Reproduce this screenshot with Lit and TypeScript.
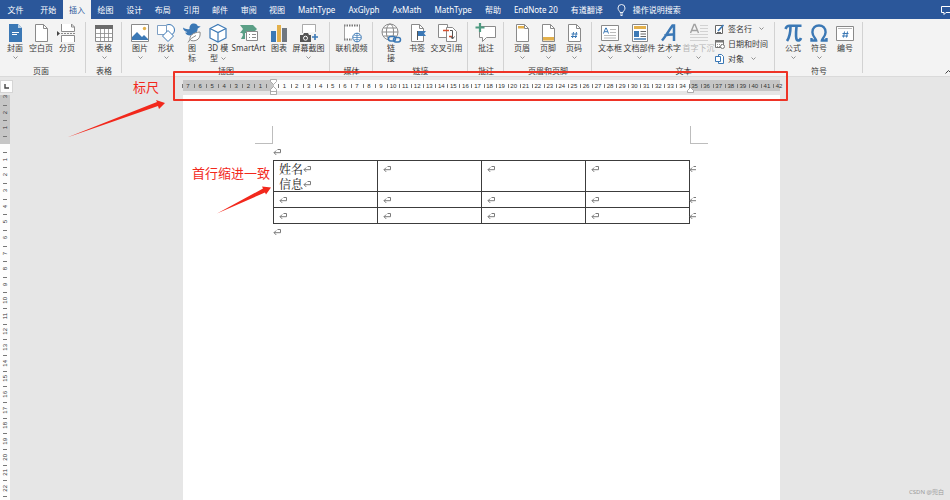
import { LitElement, html, svg, css, nothing, TemplateResult, SVGTemplateResult } from "lit";
import { customElement, property, state } from "lit/decorators.js";
import { classMap } from "lit/directives/class-map.js";

const BLUE = "#3b78b5";
const GREY = "#8a8a8a";
const GOLD = "#e3b04b";

const sheet = svg`<path d="M5.5 1.500h8l4 4v13h-12z" fill="#fff" stroke="${GREY}"/><path d="M13.500 1.500v4h4" fill="none" stroke="${GREY}"/>`;

const ICONS: Record<string, SVGTemplateResult> = {
  cover: svg`<path d="M5 1h9l4 4v14H5z" fill="${BLUE}"/><path d="M14 1v4h4z" fill="#bcd3e8"/><path d="M8 9.500h7M8 11.500h5" stroke="#fff"/>`,
  blank: sheet,
  pagebreak: svg`<path d="M5.500 1v7.500h13V4l-3-3M5.500 19v-6.500h13V19" fill="#fff" stroke="${GREY}"/><path d="M15.500 1v3h3" fill="none" stroke="${GREY}"/><path d="M5 10.500h15" stroke="${GREY}" stroke-dasharray="2 1"/><path d="M1 8l3 2.500-3 2.500z" fill="#444"/>`,
  table: svg`<path d="M2.500 2.500h17v16h-17z" fill="#fff" stroke="${GREY}"/><path d="M2 2h18v4H2z" fill="#6b6b6b"/><path d="M3 10.500h16M3 14.500h16M7.500 6v12M11.500 6v12M15.500 6v12" stroke="${GREY}" stroke-width=".8"/>`,
  picture: svg`<path d="M2.500 1.500h17v17h-17z" fill="#fff" stroke="${GREY}"/><path d="M3 17v-3l5-5 5 5 2-2 4 4v1z" fill="${BLUE}"/><circle cx="15.500" cy="5.500" r="1.700" fill="${GOLD}"/>`,
  shapes: svg`<circle cx="14" cy="7" r="5.500" fill="#fff" stroke="${BLUE}"/><path d="M2.500 2.500h9v9h-9z" fill="#fff" stroke="#7e9fc3"/><path d="M13 7.500l5.500 5.500-5.500 5.500L7.500 13z" fill="#fff" stroke="${BLUE}"/>`,
  duck: svg`<path d="M2 4.500c2 1.500 4.500 2 6.500 1.500C8.300 2.500 10 .5 13 .5c2 0 3.300 1 3.700 2.500l3 .5-3 2c0 3-2 5-3.500 6-4 2-8 1-9-2 1.500 0 2-.3 2-.6C4 8.500 2 7 2 4.500z" fill="${BLUE}"/><path d="M9 17.500c-1-5 3-8 10-8.500 1 6-3 10-9 8.500" fill="#fff" stroke="${GREY}"/><path d="M7 19.500c2-4 5-5 8-7" fill="none" stroke="${GREY}"/>`,
  cube: svg`<path d="M11 1.500l8 4v9.500l-8 4-8-4V5.500z" fill="#fff" stroke="${BLUE}" stroke-width="1.200"/><path d="M3 5.500l8 4 8-4M11 9.500V19" fill="none" stroke="${BLUE}" stroke-width="1.200"/>`,
  smartart: svg`<path d="M2 2h13l4 4-4 4H2l3-4z" fill="#5b9f86"/><path d="M3 16h4V9H4l1 3z" fill="#5b9f86"/><path d="M8.500 8.500h11v9h-11z" fill="#fff" stroke="${GREY}"/><path d="M11 11.500h1M14 11.500h4M11 14.500h1M14 14.500h4" stroke="${GREY}"/>`,
  chart: svg`<path d="M3 8h5v11H3z" fill="${BLUE}"/><path d="M9 2h4v17H9z" fill="${GOLD}"/><path d="M14 5h5v14h-5z" fill="#6f7780"/>`,
  screenshot: svg`<path d="M4.500 10V1.500h13V9" fill="#fff" stroke="${GREY}" stroke-width=".7"/><path d="M2 12h3l1-2h4l1 2h2v7H2z" fill="#555"/><circle cx="7.500" cy="15.200" r="2" fill="#555" stroke="#fff"/><path d="M17 11v6M14 14h6" stroke="${BLUE}" stroke-width="1.600"/>`,
  video: svg`<path d="M3 2h15v15H3z" fill="#fff"/><path d="M3 2.500h16M3 16.500h8" stroke="#777" stroke-width="2" stroke-dasharray="1.500 1"/><path d="M3.500 2v15M18.500 2v7" stroke="${GREY}" stroke-width=".8"/><circle cx="16" cy="14.500" r="4.300" fill="#fff" stroke="${BLUE}"/><path d="M12 14.500h8M16 10v9M13 12q3 1.500 6 0M13 17q3-1.500 6 0" fill="none" stroke="${BLUE}" stroke-width=".7"/>`,
  link: svg`<circle cx="10" cy="9" r="8" fill="#fff" stroke="${GREY}"/><ellipse cx="10" cy="9" rx="3.600" ry="8" fill="none" stroke="${GREY}"/><path d="M2 9h16M3.500 5h13M3.500 13h13" stroke="${GREY}" fill="none"/><rect x="8.500" y="13.500" width="7" height="4.500" rx="2.200" fill="#f3f3f3" stroke="${BLUE}" stroke-width="1.500"/><rect x="13.500" y="14.500" width="7" height="4.500" rx="2.200" fill="none" stroke="${BLUE}" stroke-width="1.500"/>`,
  bookmark: svg`${sheet}<path d="M11.500 8v9" stroke="#555"/><path d="M12 8h8l-2 2.500 2 2.500h-8z" fill="${BLUE}"/>`,
  crossref: svg`<path d="M2.500 1.500h9v13h-9z" fill="#fff" stroke="${GREY}"/><path d="M10.500 4.500h6l4 4v10h-10z" fill="#fff" stroke="${GREY}"/><path d="M7 7.500h6M13 13.500h4" stroke="#d6502f" stroke-width="1.500"/><path d="M14 7.500h2.500v8M14.500 13.500l2 2.500 2-2.500" fill="none" stroke="#555"/>`,
  comment: svg`<path d="M4.500 3.500h16v11h-9l-4 4v-4h-3z" fill="#fff" stroke="${GREY}"/><path d="M5 0v9M.5 4.500h9" stroke="#4d9a80" stroke-width="2.200"/>`,
  header: svg`${sheet}<path d="M7 3h6v2.500H7z" fill="${GOLD}"/>`,
  footer: svg`${sheet}<path d="M6 14h11v3.500H6z" fill="${GOLD}"/>`,
  pagenum: svg`${sheet}<path d="M10.500 9l-1 6M13.500 9l-1 6M8.500 11h6M8 13.500h6" stroke="${BLUE}"/>`,
  textbox: svg`<path d="M2.500 2.500h17v15h-17z" fill="#fff" stroke="${GREY}"/><path d="M4.500 10.500L6.700 5h.6l2.200 5.500M5.300 8.700h3.400" fill="none" stroke="${BLUE}"/><path d="M11 6.500h6M11 9.500h6M5 12.500h12M5 15h12" stroke="#aaa" stroke-width=".8"/>`,
  parts: svg`<path d="M3.500 1.500h15v17h-15z" fill="#fff" stroke="${GREY}"/><path d="M5 3h12v3H5z" fill="${GOLD}"/><path d="M5 8h5v6H5z" fill="${BLUE}"/><path d="M11.500 8.500h5.500M11.500 11h5.500M11.500 13.500h5.500" stroke="#666"/><path d="M5 16h12" stroke="${BLUE}" stroke-width="1.500"/>`,
  wordart: svg`<path d="M4 17.500C8 13 11 7 14.500 2.500h1.500L16 18M6.500 12.500c3-1 6-1.200 10-1" fill="none" stroke="${BLUE}" stroke-width="2.500"/>`,
  dropcap: svg`<path d="M2.500 10L6 1.500h1L10.500 10M4 7.500h5" fill="none" stroke="#a0a0a0" stroke-width="1.400"/><path d="M12 2.500h8M12 5.500h8M12 8.500h8M2 11.500h18M2 14.500h18M2 17.500h18" stroke="#d2d2d2"/>`,
  formula: svg`<path d="M3.500 6c1-3 2.500-3.200 4-3.200h12M8.500 3.500c0 6-.5 10-3.500 14.500M14.500 3.500c-.7 7-1 14 1.500 14 1.600 0 2.500-1 3-2.500" fill="none" stroke="${BLUE}" stroke-width="2.600"/>`,
  symbol: svg`<path d="M3.500 15v2.500h4.700c0-2-3.800-4-3.800-8.200 0-4.500 3-6.800 6.600-6.800s6.600 2.300 6.600 6.800c0 4.200-3.800 6.200-3.800 8.200h4.700V15" fill="none" stroke="${BLUE}" stroke-width="2.400"/>`,
  number: svg`<path d="M2.500 3.500h17v14h-17z" fill="#fff" stroke="${GREY}"/><path d="M4 5.500h14" stroke="#bbb"/><path d="M10.500 8.500l-1 6M13.500 8.500l-1 6M8.500 10.500h6M8 13h6" stroke="${BLUE}"/>`,
};

const SMALL: Record<string, SVGTemplateResult> = {
  signature: svg`<path d="M.5 1.500h7v8h-7z" fill="#fff" stroke="#666"/><path d="M3 7l5.500-6" stroke="${BLUE}" stroke-width="1.600"/><path d="M2 8.500h4" stroke="#666"/>`,
  date: svg`<path d="M.5 1.500h8v7h-8z" fill="#fff" stroke="#777"/><path d="M0 1h9v2.500H0z" fill="#777"/><path d="M2 5.500h5M2 7.500h3" stroke="#999" stroke-dasharray="1 1"/><circle cx="7.500" cy="7.500" r="2" fill="#fff" stroke="#777"/>`,
  object: svg`<path d="M3.500.5h3l2 2v7h-5z" fill="#fff" stroke="${BLUE}"/><path d="M.5 2.500h5v5h-5z" fill="#fff" stroke="${BLUE}"/>`,
};

type Tool = { icon: string; lines: string[]; drop?: boolean; size?: "wide" | "wider"; disabled?: boolean };
type Group = { name: string; tools: Tool[]; side?: { icon: string; text: string; drop?: boolean }[] };

const GROUPS: Group[] = [
  { name: "页面", tools: [
    { icon: "cover", lines: ["封面"], drop: true },
    { icon: "blank", lines: ["空白页"] },
    { icon: "pagebreak", lines: ["分页"] },
  ] },
  { name: "表格", tools: [{ icon: "table", lines: ["表格"], drop: true }] },
  { name: "插图", tools: [
    { icon: "picture", lines: ["图片"], drop: true },
    { icon: "shapes", lines: ["形状"], drop: true },
    { icon: "duck", lines: ["图", "标"] },
    { icon: "cube", lines: ["3D 模", "型"], drop: true },
    { icon: "smartart", lines: ["SmartArt"], size: "wider" },
    { icon: "chart", lines: ["图表"] },
    { icon: "screenshot", lines: ["屏幕截图"], drop: true, size: "wide" },
  ] },
  { name: "媒体", tools: [{ icon: "video", lines: ["联机视频"], size: "wide" }] },
  { name: "链接", tools: [
    { icon: "link", lines: ["链", "接"] },
    { icon: "bookmark", lines: ["书签"] },
    { icon: "crossref", lines: ["交叉引用"], size: "wide" },
  ] },
  { name: "批注", tools: [{ icon: "comment", lines: ["批注"] }] },
  { name: "页眉和页脚", tools: [
    { icon: "header", lines: ["页眉"], drop: true },
    { icon: "footer", lines: ["页脚"], drop: true },
    { icon: "pagenum", lines: ["页码"], drop: true },
  ] },
  { name: "文本", tools: [
    { icon: "textbox", lines: ["文本框"], drop: true },
    { icon: "parts", lines: ["文档部件"], drop: true, size: "wide" },
    { icon: "wordart", lines: ["艺术字"], drop: true },
    { icon: "dropcap", lines: ["首字下沉"], drop: true, size: "wide", disabled: true },
  ], side: [
    { icon: "signature", text: "签名行", drop: true },
    { icon: "date", text: "日期和时间" },
    { icon: "object", text: "对象", drop: true },
  ] },
  { name: "符号", tools: [
    { icon: "formula", lines: ["公式"], drop: true },
    { icon: "symbol", lines: ["符号"], drop: true },
    { icon: "number", lines: ["编号"] },
  ] },
];

const chevron = html`<svg class="chevron" width="5" height="3" viewBox="0 0 5 3" aria-hidden="true"><path d="M.5.5l2 2 2-2" fill="none" stroke="#777" stroke-width=".8"/></svg>`;
const mark = html`<svg class="mark" width="8" height="8" viewBox="0 0 8 8" aria-hidden="true"><path d="M4.500 1.500h3v3.200H1M3.200 2.500L1 4.700l2.200 2.200" fill="none" stroke="#7a7a7a"/></svg>`;

const buttonReset = css`
  * { box-sizing: border-box; }
  button {
    appearance: none; border: 0; margin: 0; padding: 0; background: none;
    font: inherit; color: inherit; white-space: nowrap;
  }
  svg { display: block; flex: none; }
`;

const TABS = ["文件", "开始", "插入", "绘图", "设计", "布局", "引用", "邮件", "审阅",
  "视图", "MathType", "AxGlyph", "AxMath", "MathType", "帮助", "EndNote 20", "有道翻译"];

@customElement("ribbon-tabs")
export class RibbonTabs extends LitElement {
  @state() private active = 2;

  static styles = [buttonReset, css`
    :host { display: flex; height: 19px; background: #2b579a; color: #fff; }
    .file { width: 34px; padding-right: 3px; }
    .even { display: grid; grid-template-columns: repeat(8, 1fr); width: 229px; }
    .rest { display: flex; gap: 1px; }
    .rest button { padding: 0 6px; }
    button.on { background: #f3f3f3; color: #2b579a; }
    .search { display: flex; align-items: center; gap: 7px; margin-left: 8px; }
    .notes { margin-left: auto; width: 9px; overflow: hidden; display: flex; align-items: center; }
  `];

  private tab = (i: number) => html`<button role="tab" aria-selected=${this.active === i}
    class=${classMap({ on: this.active === i, file: i === 0 })}
    @click=${() => (this.active = i)}>${TABS[i]}</button>`;

  render() {
    const ids = TABS.map((_, i) => i);
    return html`
      ${this.tab(0)}
      <div class="even">${ids.slice(1, 9).map(this.tab)}</div>
      <div class="rest">${ids.slice(9).map(this.tab)}</div>
      <button class="search">
        <svg width="9" height="12" viewBox="0 0 9 12" aria-hidden="true"><path d="M3 8.500C3 7 1 6.500 1 4a3.500 3.500 0 017 0c0 2.500-2 3-2 4.500zM3 10h3M3.500 11.500h2" fill="none" stroke="#fff" stroke-width=".9"/></svg>
        操作说明搜索
      </button>
      <button class="notes" aria-label="批注">
        <svg width="14" height="10" viewBox="0 0 14 10"><path d="M.5 1.500h12v6H5l-2 2v-2H.5z" fill="none" stroke="#fff"/></svg>
      </button>`;
  }
}

@customElement("ribbon-group")
export class RibbonGroup extends LitElement {
  @property({ attribute: false }) group!: Group;

  static styles = [buttonReset, css`
    :host {
      display: flex; flex-direction: column; justify-content: space-between;
      padding: 2px 5px 0; color: #3a3a3a; position: relative;
    }
    :host(:first-of-type) { padding: 2px 6px 0 2px; }
    :host::after {
      content: ""; position: absolute; right: 0; top: 3px; bottom: 3px;
      width: 1px; background: #d2d2d2;
    }
    .tools { display: flex; align-items: flex-start; }
    .tool { display: flex; flex-direction: column; align-items: center; width: 26px; padding-top: 2px; line-height: 10px; }
    .tool.wide { width: 33px; }
    .tool.wider { width: 35px; }
    .tool:disabled { color: #b5b5b5; }
    .text { display: flex; flex-direction: column; align-items: center; }
    .last { display: flex; align-items: center; gap: 3px; }
    .tool > .chevron { margin-top: 3px; }
    .side { display: flex; flex-direction: column; width: 55px; }
    .side button { display: flex; align-items: center; gap: 3px; height: 15px; line-height: 12px; }
    .side .chevron { margin-left: 4px; }
    .name { text-align: center; line-height: 10px; }
  `];

  private tool(t: Tool): TemplateResult {
    const two = t.lines.length > 1;
    return html`<button class=${classMap({ tool: true, wide: t.size === "wide", wider: t.size === "wider" })} ?disabled=${t.disabled}>
      <svg width="22" height="20" viewBox="0 0 22 20" aria-hidden="true">${ICONS[t.icon]}</svg>
      <span class="text">
        <span>${t.lines[0]}</span>
        ${two ? html`<span class="last">${t.lines[1]}${t.drop ? chevron : nothing}</span>` : nothing}
      </span>
      ${t.drop && !two ? chevron : nothing}
    </button>`;
  }

  render() {
    const g = this.group;
    return html`
      <div class="tools">
        ${g.tools.map((t) => this.tool(t))}
        ${g.side ? html`<div class="side">${g.side.map((s) => html`<button>
          <svg width="10" height="10" viewBox="0 0 10 10" aria-hidden="true">${SMALL[s.icon]}</svg>
          ${s.text}${s.drop ? chevron : nothing}</button>`)}</div>` : nothing}
      </div>
      <div class="name">${g.name}</div>`;
  }
}

@customElement("word-page")
export class WordPage extends LitElement {
  static styles = css`
    * { box-sizing: border-box; }
    :host { display: block; flex: 1; background: #fff; padding: 31px 90px 0; color: #222; }
    .corners { display: flex; justify-content: space-between; margin: 0 -18px; }
    .corner { width: 18px; height: 18px; border: 0 solid #bdbdbd; border-bottom-width: 1px; }
    .corner.left { border-right-width: 1px; }
    .corner.right { border-left-width: 1px; }
    .mark { display: block; flex: none; }
    .para { height: 16px; display: flex; align-items: center; }
    .grid { width: 417px; border-collapse: collapse; table-layout: fixed; }
    td { height: 16px; padding: 0 0 0 5px; border: 1px solid #3c3c3c; vertical-align: top; position: relative; }
    .line { display: flex; align-items: center; height: 15px; font: 12px/15px "Noto Serif CJK SC", "Liberation Serif", "Noto Sans CJK SC", serif; }
    .rowend { position: absolute; left: 100%; top: 0; width: 7px; height: 15px; overflow: hidden; display: flex; align-items: center; }
  `;

  render() {
    const rows = [["姓名", "信息"], [""], [""]];
    return html`
      <div class="corners"><div class="corner left"></div><div class="corner right"></div></div>
      <div class="para">${mark}</div>
      <table class="grid">
        ${rows.map((lines) => html`<tr>
          <td>${lines.map((l) => html`<div class="line">${l}${mark}</div>`)}</td>
          <td><div class="line">${mark}</div></td>
          <td><div class="line">${mark}</div></td>
          <td><div class="line">${mark}</div><span class="rowend">${mark}</span></td>
        </tr>`)}
      </table>
      <div class="para">${mark}</div>`;
  }
}

@customElement("app-root")
export class AppRoot extends LitElement {
  static styles = [buttonReset, css`
    :host {
      display: flex; flex-direction: column; min-height: 100vh; position: relative; overflow: hidden;
      background: #e6e6e6; font: 8px/10px "Noto Sans", "Noto Sans CJK SC", sans-serif;
    }
    .ribbon { display: flex; height: 58px; background: #f3f3f3; border-bottom: 1px solid #dadada; }
    .collapse { margin-left: auto; align-self: flex-end; width: 5px; overflow: hidden; }
    .work { display: flex; flex: 1; padding-top: 3px; }
    .left { width: 13px; display: flex; flex-direction: column; }
    .corner { width: 13px; height: 13px; background: #fdfdfd; border: 1px solid #d5d5d5; display: grid; place-items: center; }
    .vruler {
      flex: 1 1 0; width: 10px; margin-top: 2px; overflow: hidden;
      background: linear-gradient(#c6c6c6 49px, #fdfdfd 49px);
    }
    .vscale { display: grid; grid-template-rows: repeat(26, 1fr); height: 407px; margin-top: -6px; position: relative; }
    .vcell { display: grid; place-items: center; position: relative; }
    .vcell span { writing-mode: vertical-rl; transform: rotate(180deg); }
    .vcell::before, .vscale::after { content: ""; position: absolute; top: 0; left: 3px; width: 4px; height: 1px; background: #777; }
    .vscale::after { top: 100%; }
    .scale { font: 6px/8px "Liberation Sans", sans-serif; color: #333; }
    .canvas { flex: 1; display: flex; flex-direction: column; align-items: center; }
    .column { width: 597px; flex: 1; display: flex; flex-direction: column; }
    .hruler {
      height: 11px; margin-bottom: 4px; position: relative;
      background: linear-gradient(90deg, #c6c6c6 91px, #fdfdfd 91px, #fdfdfd 507px, #c6c6c6 507px);
    }
    .hscale { display: grid; grid-template-columns: repeat(50, 1fr); width: 603px; height: 11px; margin-left: -1px; }
    .hcell { display: grid; place-items: center; position: relative; }
    .hcell::before { content: ""; position: absolute; left: 0; top: 4px; width: 1px; height: 4px; background: #777; }
    .indent { position: absolute; }
    .first { left: 87px; top: -1px; }
    .right { left: 504px; top: 7px; }
    .frame { position: absolute; left: 173px; top: 71px; width: 615px; height: 30px; border: 2px solid #ee3326; border-radius: 1px; }
    .arrows { position: absolute; left: 0; top: 0; pointer-events: none; }
    .note { position: absolute; font-size: 13px; line-height: 18px; color: #f2281c; white-space: nowrap; }
    .note.ruler { left: 133px; top: 78px; }
    .note.same { left: 192px; top: 164px; }
    .credit { position: absolute; right: 6px; bottom: 3px; color: #9a9a9a; font-size: 6px; }
  `];

  render() {
    const h = Array.from({ length: 50 }, (_, i) => Math.abs(i - 7));
    const v = Array.from({ length: 26 }, (_, i) => Math.abs(i - 3));
    return html`
      <ribbon-tabs role="tablist"></ribbon-tabs>
      <div class="ribbon">
        ${GROUPS.map((g) => html`<ribbon-group .group=${g}></ribbon-group>`)}
        <button class="collapse" aria-label="折叠功能区">
          <svg width="8" height="8" viewBox="0 0 8 8"><path d="M.5 5.500l3-3 3 3" fill="none" stroke="#444"/></svg>
        </button>
      </div>
      <div class="work">
        <div class="left">
          <button class="corner" aria-label="制表符">
            <svg width="5" height="5" viewBox="0 0 5 5"><path d="M1 0v4h4" fill="none" stroke="#444" stroke-width="1.400"/></svg>
          </button>
          <div class="vruler"><div class="vscale scale">${v.map((n) => html`<div class="vcell"><span>${n || nothing}</span></div>`)}</div></div>
        </div>
        <div class="canvas"><div class="column">
          <div class="hruler">
            <div class="hscale scale">${h.map((n) => html`<div class="hcell">${n || nothing}</div>`)}</div>
            <svg class="indent first" width="7" height="16" viewBox="0 0 7 16" aria-hidden="true"><path d="M.5.5h6v2l-3 3-3-3zM.5 15.500v-5l3-3 3 3v5zM.5 12.500h6" fill="#fff" stroke="#999" stroke-width=".8"/></svg>
            <svg class="indent right" width="7" height="7" viewBox="0 0 7 7" aria-hidden="true"><path d="M.5 5.500v-2l3-3 3 3v2z" fill="#fff" stroke="#999" stroke-width=".8"/></svg>
          </div>
          <word-page></word-page>
        </div></div>
      </div>
      <div class="frame"></div>
      <svg class="arrows" width="280" height="220" viewBox="0 0 280 220" aria-hidden="true">
        <path d="M67 137.500l90-35.500-1-2 9 3-6 6-1-3z" fill="#f2281c"/>
        <path d="M217 213.500l46-25-1-2 9 1-5 7-1-2z" fill="#f2281c"/>
      </svg>
      <div class="note ruler">标尺</div>
      <div class="note same">首行缩进一致</div>
      <div class="credit">CSDN @兜白</div>`;
  }
}
